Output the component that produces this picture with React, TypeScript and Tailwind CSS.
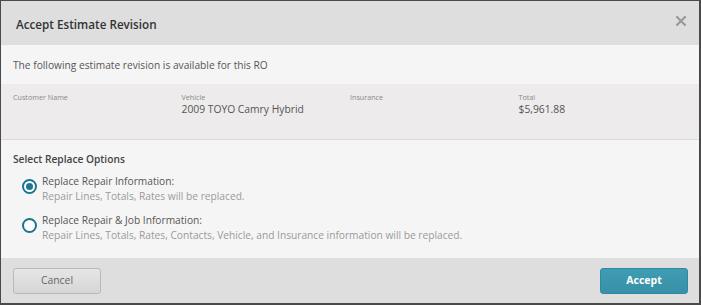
import { useState } from "react";

const font = { fontFamily: '"Open Sans", "Liberation Sans", sans-serif' };

function InfoField({ label, value }: { label: string; value?: string }) {
  return (
    <div className="flex flex-col">
      <span className="text-[7.2px] leading-[10px] text-[#8a8a8a]">{label}</span>
      {value ? <span className="text-[10.3px] leading-[14px] text-[#555]">{value}</span> : null}
    </div>
  );
}

function RadioOption({
  checked,
  title,
  detail,
  onSelect,
}: {
  checked: boolean;
  title: string;
  detail: string;
  onSelect: () => void;
}) {
  return (
    <button type="button" onClick={onSelect} className="flex items-start gap-[5px] text-left">
      <span className="mt-[5px] flex h-[15px] w-[15px] items-center justify-center rounded-full border-2 border-[#1b7490] bg-white">
        {checked ? <span className="h-[7px] w-[7px] rounded-full bg-[#1b7490]" /> : null}
      </span>
      <span className="flex flex-col">
        <span className="text-[10.2px] leading-[15px] text-[#555]">{title}</span>
        <span className="text-[10.2px] leading-[15px] text-[#9a9a9a]">{detail}</span>
      </span>
    </button>
  );
}

export default function App() {
  const [option, setOption] = useState<"repair" | "job">("repair");

  return (
    <div
      style={font}
      className="flex h-[305px] w-[701px] flex-col border-t border-l border-b-2 border-r-2 border-[#4a4a4a] bg-[#f5f5f5]"
    >
      <div className="flex h-[44px] items-center justify-between bg-[#dedede] pl-[15px] pr-[13px]">
        <h2 className="mt-[3px] text-[11.7px] font-semibold text-[#333]">Accept Estimate Revision</h2>
        <svg width="10" height="10" viewBox="0 0 10 10" className="mb-[4px]">
          <path d="M1 1L9 9M9 1L1 9" stroke="#9a9a9a" strokeWidth="2.2" strokeLinecap="square" />
        </svg>
      </div>

      <p className="px-[12px] pt-[13px] pb-[11px] text-[10.2px] leading-[15px] text-[#555]">
        The following estimate revision is available for this RO
      </p>

      <div className="grid h-[56px] grid-cols-4 border-b border-[#dadada] bg-[#edebeb] px-[12px] pt-[8px]">
        <InfoField label="Customer Name" />
        <InfoField label="Vehicle" value="2009 TOYO Camry Hybrid" />
        <InfoField label="Insurance" />
        <InfoField label="Total" value="$5,961.88" />
      </div>

      <div className="flex flex-1 flex-col px-[12px] pt-[11px]">
        <h3 className="text-[10.2px] font-semibold leading-[16px] text-[#444]">Select Replace Options</h3>
        <div className="mt-[7px] flex flex-col gap-[9px] pl-[9px]">
          <RadioOption
            checked={option === "repair"}
            title="Replace Repair Information:"
            detail="Repair Lines, Totals, Rates will be replaced."
            onSelect={() => setOption("repair")}
          />
          <RadioOption
            checked={option === "job"}
            title="Replace Repair & Job Information:"
            detail="Repair Lines, Totals, Rates, Contacts, Vehicle, and Insurance information will be replaced."
            onSelect={() => setOption("job")}
          />
        </div>
      </div>

      <div className="flex h-[45px] items-center justify-between bg-[#dedede] pl-[12px] pr-[11px] pt-[1px]">
        <button
          type="button"
          className="h-[26px] w-[88px] rounded-[3px] border border-[#b9b9b9] bg-gradient-to-b from-[#e6e6e6] to-[#d6d6d6] text-[10.4px] text-[#666]"
        >
          Cancel
        </button>
        <button
          type="button"
          className="h-[26px] w-[88px] rounded-[3px] border border-[#2e8aa0] bg-gradient-to-b from-[#3f9db3] to-[#3790a6] text-[10.5px] font-bold text-white"
        >
          Accept
        </button>
      </div>
    </div>
  );
}
